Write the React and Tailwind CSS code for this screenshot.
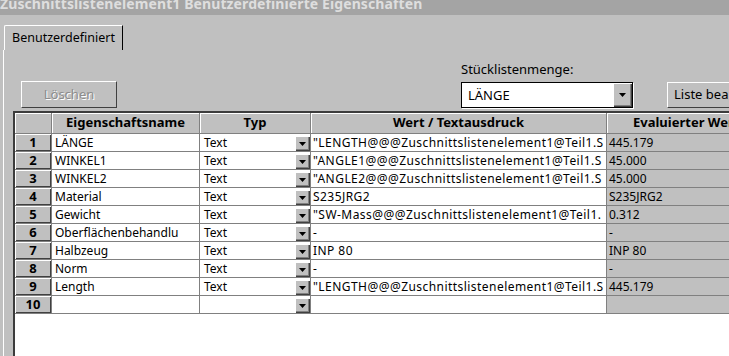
import React from "react";

const rows = [
  ["LÄNGE", "\"LENGTH@@@Zuschnittslistenelement1@Teil1.S", "445.179"],
  ["WINKEL1", "\"ANGLE1@@@Zuschnittslistenelement1@Teil1.S", "45.000"],
  ["WINKEL2", "\"ANGLE2@@@Zuschnittslistenelement1@Teil1.S", "45.000"],
  ["Material", "S235JRG2", "S235JRG2"],
  ["Gewicht", "\"SW-Mass@@@Zuschnittslistenelement1@Teil1.", "0.312"],
  ["Oberflächenbehandlu", "-", "-"],
  ["Halbzeug", "INP 80", "INP 80"],
  ["Norm", "-", "-"],
  ["Length", "\"LENGTH@@@Zuschnittslistenelement1@Teil1.S", "445.179"],
  ["", "", ""],
];

function Arrow() {
  return (
    <svg width="7" height="4" viewBox="0 0 7 4">
      <path d="M0 0H7L3.5 4Z" fill="#000" />
    </svg>
  );
}

function DropBtn({ className }) {
  return (
    <div
      className={
        "shrink-0 flex items-center justify-center bg-[#c0c0c0] shadow-[inset_1px_1px_0_#ffffff,inset_-1px_-1px_0_#404040,inset_-2px_-2px_0_#808080] " +
        className
      }
    >
      <Arrow />
    </div>
  );
}

export default function App() {
  const font = { fontFamily: '"Noto Sans", "Open Sans", sans-serif' };
  return (
    <div
      className="w-[729px] h-[356px] overflow-hidden bg-[#c0c0c0] text-black flex flex-col"
      style={font}
    >
      {/* title bar */}
      <div className="h-[15px] shrink-0 bg-[#a4a4a4] overflow-hidden">
        <div className="mt-[-5px] text-[14px] leading-[18px] font-bold text-[#dedede] whitespace-nowrap tracking-[0.1px]">
          Zuschnittslistenelement1 Benutzerdefinierte Eigenschaften
        </div>
      </div>

      {/* tab strip */}
      <div className="h-[35px] shrink-0 flex items-end pl-[4px]">
        <div className="h-[25px] w-[119px] border-t border-l border-white border-r border-r-black rounded-tl-[2px] flex items-center pl-[7px] text-[12.5px] leading-none">
          Benutzerdefiniert
        </div>
      </div>

      {/* panel */}
      <div className="flex-1 ml-[3px] border-l border-white flex flex-col min-h-0">
        {/* controls */}
        <div className="h-[61px] shrink-0 flex items-end pb-[3px]">
          <div className="shrink-0 ml-[17px] w-[96px] h-[27px] border-t border-l border-white border-r border-b border-r-[#404040] border-b-[#404040] flex items-center justify-center text-[13px] text-[#8c8c8c] [text-shadow:1px_1px_0_#ffffff]">
            Löschen
          </div>
          <div className="shrink-0 ml-[344px] flex flex-col">
            <div className="text-[13px] leading-[16px] mb-[5px] whitespace-nowrap">Stücklistenmenge:</div>
            <div className="w-[172px] h-[26px] border border-black shadow-[1px_1px_0_#ffffff] bg-white flex items-center">
              <div className="flex-1 pl-[6px] text-[13px] leading-none">LÄNGE</div>
              <DropBtn className="w-[19px] h-[24px]" />
            </div>
          </div>
          <div className="shrink-0 ml-[34px] w-[100px] h-[26px] border-t border-l border-white border-r border-b border-r-[#404040] border-b-[#404040] flex items-center pl-[6px] text-[13px] whitespace-nowrap overflow-hidden">
            Liste bearbeiten
          </div>
        </div>

        {/* table */}
        <div className="flex-1 ml-[9px] bg-white border-l-2 border-t-2 border-[#3c3c3c] overflow-hidden">
          <div className="grid grid-cols-[37px_148px_111px_296px_160px] text-[12px]">
            {/* header */}
            <div className="h-[21px] bg-[#c0c0c0] border-r border-b border-[#808080] shadow-[inset_1px_1px_0_#ffffff]" />
            {["Eigenschaftsname", "Typ", "Wert / Textausdruck", "Evaluierter Wert"].map((h, i) => (
              <div
                key={i}
                className={
                  "h-[21px] bg-[#c0c0c0] border-r border-b border-[#808080] shadow-[inset_1px_1px_0_#ffffff] font-bold text-[13px] flex items-center whitespace-nowrap overflow-hidden " +
                  (i === 3 ? "pl-[26px]" : "justify-center")
                }
              >
                {h}
              </div>
            ))}
            {rows.map((r, idx) => (
              <React.Fragment key={idx}>
                <div className="h-[18px] bg-[#c0c0c0] border-r border-b border-[#808080] shadow-[inset_1px_1px_0_#ffffff,inset_-1px_-1px_0_#404040] flex items-center justify-center font-bold text-[13px] leading-none">
                  {idx + 1}
                </div>
                <div className="h-[18px] border-r border-b border-[#808080] flex items-center pl-[3px] whitespace-nowrap overflow-hidden leading-none">
                  {r[0]}
                </div>
                <div className="h-[18px] border-r border-b border-[#808080] flex items-center pl-[4px] leading-none">
                  <div className="flex-1">{idx < 9 ? "Text" : ""}</div>
                  <DropBtn className="w-[15px] h-[15px] mt-[2px]" />
                </div>
                <div className="h-[18px] border-r border-b border-[#808080] flex items-center pl-[2px] whitespace-nowrap overflow-hidden leading-none tracking-[0.45px]">
                  {r[1]}
                </div>
                <div className="h-[18px] bg-[#c0c0c0] border-b border-[#808080] flex items-center pl-[2px] whitespace-nowrap overflow-hidden leading-none">
                  {r[2]}
                </div>
              </React.Fragment>
            ))}
          </div>
        </div>
      </div>
    </div>
  );
}
